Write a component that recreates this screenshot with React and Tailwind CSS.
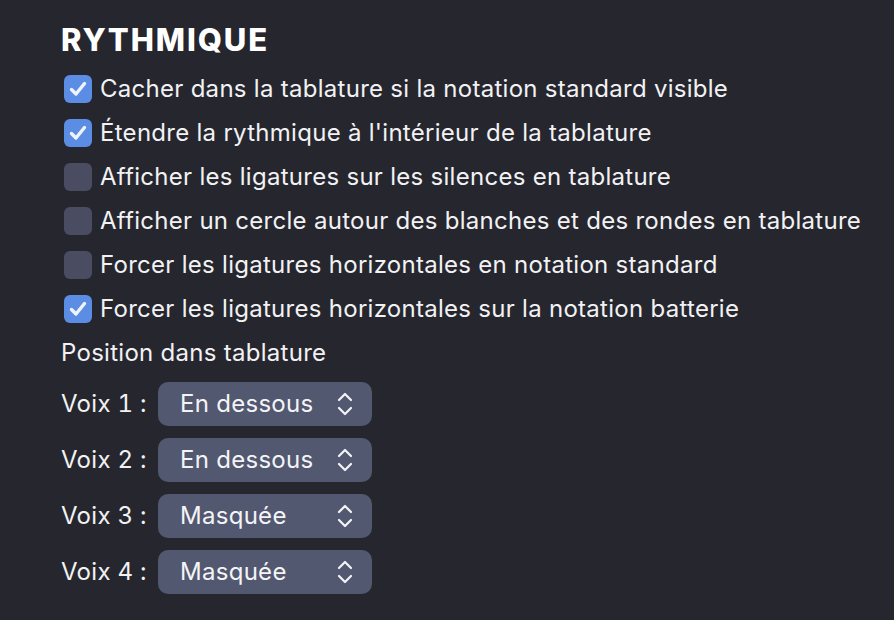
import React from "react";

const font = { fontFamily: 'Inter, "Liberation Sans", Arial, sans-serif' };

function Check({ checked }) {
  if (checked) {
    return (
      <div className="w-[28px] h-[28px] rounded-[6px] bg-[#5b8de4] flex items-center justify-center shrink-0">
        <svg width="22" height="22" viewBox="0 0 22 22" fill="none">
          <path d="M4.5 11.5 L9 16 L17.5 5.5" stroke="#eef3fc" strokeWidth="3.4" strokeLinecap="round" strokeLinejoin="round" />
        </svg>
      </div>
    );
  }
  return <div className="w-[28px] h-[28px] rounded-[6px] bg-[#4a4c62] shrink-0" />;
}

function Row({ checked, label }) {
  return (
    <div className="flex items-center gap-[8px] h-[44px] pt-[1px]">
      <Check checked={checked} />
      <span className="text-[24px] tracking-[0.28px] text-[#f2f2f4] whitespace-nowrap">{label}</span>
    </div>
  );
}

function Select({ label, value }) {
  return (
    <div className="flex items-center h-[56px]">
      <span className="text-[24px] tracking-[0.28px] tabular-nums text-[#f2f2f4] w-[97px] whitespace-nowrap">{label}</span>
      <div className="w-[214px] h-[44px] rounded-[10px] bg-[#525870] flex items-center justify-between pl-[22px] pr-[18px]">
        <span className="text-[24px] tracking-[0.28px] text-[#f4f4f6]">{value}</span>
        <svg width="18" height="28" viewBox="0 0 18 28" fill="none">
          <path d="M3 10 L9 4 L15 10" stroke="#f4f4f6" strokeWidth="2.2" strokeLinecap="round" strokeLinejoin="round" />
          <path d="M3 18 L9 24 L15 18" stroke="#f4f4f6" strokeWidth="2.2" strokeLinecap="round" strokeLinejoin="round" />
        </svg>
      </div>
    </div>
  );
}

export default function App() {
  const rows = [
    [true, "Cacher dans la tablature si la notation standard visible"],
    [true, "Étendre la rythmique à l'intérieur de la tablature"],
    [false, "Afficher les ligatures sur les silences en tablature"],
    [false, "Afficher un cercle autour des blanches et des rondes en tablature"],
    [false, "Forcer les ligatures horizontales en notation standard"],
    [true, "Forcer les ligatures horizontales sur la notation batterie"],
  ];
  return (
    <div className="w-[894px] h-[620px] bg-[#26262e] overflow-hidden" style={font}>
      <div className="pl-[61px] pt-[22px]">
        <div className="text-[31px] font-extrabold tracking-[1.9px] text-white leading-[36px] h-[44px]">RYTHMIQUE</div>
        <div className="pl-[3px] flex flex-col">
          {rows.map(([c, l], i) => (
            <Row key={i} checked={c} label={l} />
          ))}
        </div>
        <div className="text-[24px] tracking-[0.28px] text-[#f2f2f4] h-[46px] flex items-center">Position dans tablature</div>
        <div className="flex flex-col">
          <Select label="Voix 1 :" value="En dessous" />
          <Select label="Voix 2 :" value="En dessous" />
          <Select label="Voix 3 :" value="Masquée" />
          <Select label="Voix 4 :" value="Masquée" />
        </div>
      </div>
    </div>
  );
}
